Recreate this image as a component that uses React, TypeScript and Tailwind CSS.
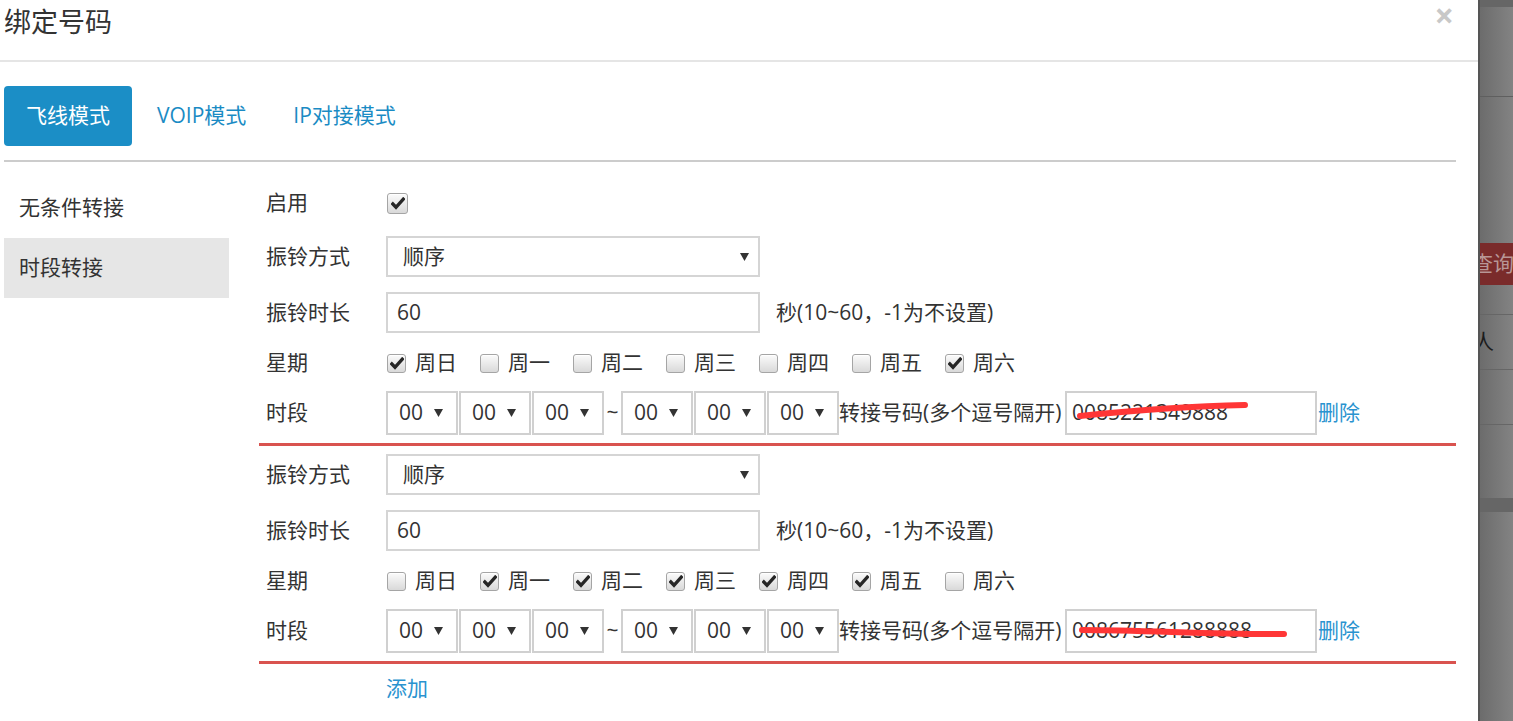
import React from 'react';

type Day = { name: string; on: boolean };

const Caret = () => (
  <svg width="9" height="8" viewBox="0 0 9 8" className="shrink-0">
    <path d="M0 0h9L4.5 8z" fill="#333" />
  </svg>
);

const Box: React.FC<{ on: boolean; big?: boolean }> = ({ on, big }) => (
  <span
    className={
      (big ? 'w-[21px] h-[21px] ' : 'w-[19px] h-[19px] ') +
      'shrink-0 flex items-center justify-center rounded-[3px] border border-[#a5a5a5] bg-gradient-to-b from-[#fbfbfb] to-[#d9d9d9] shadow-[inset_0_1px_0_#fff]'
    }
  >
    {on && (
      <svg width="14" height="13" viewBox="0 0 14 13">
        <path d="M1.8 7 L5 10.3 L12.3 2.2" stroke="#262626" strokeWidth="3.4" fill="none" strokeLinecap="square" />
      </svg>
    )}
  </span>
);

const TimeSelect = () => (
  <div className="w-[72px] h-[44px] shrink-0 border-2 border-[#d0d0d0] flex items-center justify-between pl-[11px] pr-[13px]">
    <span>00</span>
    <Caret />
  </div>
);

const Row: React.FC<{ label: string; className: string; children: React.ReactNode }> = ({ label, className, children }) => (
  <div className={'flex items-center ' + className}>
    <div className="w-[127px] pl-[7px] shrink-0">{label}</div>
    {children}
  </div>
);

const Block: React.FC<{ first?: boolean; days: Day[]; phone: string; scribble: string }> = ({ first, days, phone, scribble }) => (
  <div>
    {first && (
      <Row label="启用" className="h-[40px] mb-[13px]">
        <span className="ml-[1px]">
          <Box on big />
        </span>
      </Row>
    )}
    <Row label="振铃方式" className="h-[41px]">
      <div className="w-[374px] h-[41px] border-2 border-[#d5d5d5] flex items-center justify-between pl-[15px] pr-[9px]">
        <span>顺序</span>
        <Caret />
      </div>
    </Row>
    <Row label="振铃时长" className="h-[41px] mt-[15px]">
      <div className="w-[374px] h-[41px] border-2 border-[#d5d5d5] flex items-center pl-[9px]">60</div>
      <span className="ml-[16px]">秒(10~60，-1为不设置)</span>
    </Row>
    <Row label="星期" className="h-[40px] mt-[10px]">
      <div className="flex items-center ml-[1px]">
        {days.map((d) => (
          <div key={d.name} className="w-[93px] flex items-center gap-[9px]">
            <Box on={d.on} />
            <span>{d.name}</span>
          </div>
        ))}
      </div>
    </Row>
    <Row label="时段" className="h-[44px] mt-[8px]">
      <div className="flex items-center gap-[1px]">
        <TimeSelect />
        <TimeSelect />
        <TimeSelect />
      </div>
      <span className="w-[17px] text-center">~</span>
      <div className="flex items-center gap-[1px]">
        <TimeSelect />
        <TimeSelect />
        <TimeSelect />
      </div>
      <span className="w-[226px] whitespace-nowrap">转接号码(多个逗号隔开)</span>
      <div className="relative w-[252px] h-[44px] border-2 border-[#d0d0d0] flex items-center pl-[5px]">
        <span>{phone}</span>
        <svg className="absolute left-0 top-0" width="252" height="44" viewBox="0 0 252 44">
          <path d={scribble} stroke="#ff3636" strokeWidth="6" fill="none" strokeLinecap="round" />
        </svg>
      </div>
      <a className="ml-[1px] text-[#2a93cf] cursor-pointer">删除</a>
    </Row>
    <div className="h-[3px] bg-[#d9534f] mt-[8px]" />
  </div>
);

const week = ['周日', '周一', '周二', '周三', '周四', '周五', '周六'];

export default function App() {
  return (
    <div className="flex w-[1513px] h-[721px] overflow-hidden bg-white text-[21px] text-[#333] font-['Open_Sans','Noto_Sans_CJK_SC',sans-serif]">
      <div className="w-[1478px] shrink-0 bg-white">
        <div className="h-[62px] border-b-2 border-[#e5e5e5] flex justify-between items-start pl-[4px] pr-[24px]">
          <h4 className="text-[27px] leading-[36px] pt-[4px]">绑定号码</h4>
          <span className="text-[34px] leading-[30px] font-bold text-[#c8c8c8]">×</span>
        </div>
        <div className="pl-[4px] pr-[22px]">
          <div className="flex gap-[3px] mt-[24px] pb-[14px] border-b-2 border-[#cccccc]">
            <div className="h-[60px] px-[22px] flex items-center rounded-[4px] bg-[#1b8ec6] text-white">飞线模式</div>
            <div className="h-[60px] px-[22px] flex items-center text-[#1a8bc4]">VOIP模式</div>
            <div className="h-[60px] px-[22px] flex items-center text-[#1a8bc4]">IP对接模式</div>
          </div>
          <div className="flex">
            <div className="w-[225px] shrink-0 mt-[16px]">
              <div className="h-[60px] flex items-center pl-[15px]">无条件转接</div>
              <div className="h-[60px] flex items-center pl-[15px] bg-[#e6e6e6]">时段转接</div>
            </div>
            <div className="ml-[30px] flex-1 mt-[21px]">
              <Block
                first
                days={week.map((n) => ({ name: n, on: n === '周日' || n === '周六' }))}
                phone="0085221349888"
                scribble="M13 23 C 60 18, 120 13, 178 12"
              />
              <div className="mt-[8px]">
                <Block
                  days={week.map((n) => ({ name: n, on: n !== '周日' && n !== '周六' }))}
                  phone="008675561288888"
                  scribble="M15 19 C 80 19, 150 24, 217 23"
                />
              </div>
              <div className="pl-[127px] mt-[10px] leading-[28px]">
                <a className="text-[#2a93cf] cursor-pointer">添加</a>
              </div>
            </div>
          </div>
        </div>
      </div>
      <div className="flex-1 flex flex-col border-l-2 border-[#555] bg-gradient-to-r from-[#6c6c6c] to-[#838383] overflow-hidden">
        <div className="h-[7px] bg-[#666] shrink-0" />
        <div className="h-[90px] border-b border-[#5f5f5f] shrink-0" />
        <div className="h-[146px] shrink-0" />
        <div className="h-[42px] shrink-0 bg-[#7a2b2b] flex items-center whitespace-nowrap">
          <span className="-ml-[8px] text-[#b89696]">查询</span>
        </div>
        <div className="h-[30px] border-b border-[#666] shrink-0" />
        <div className="h-[55px] border-b border-[#666] shrink-0 flex items-center whitespace-nowrap">
          <span className="-ml-[7px] text-[#1c1c1c]">人</span>
        </div>
        <div className="h-[55px] border-b border-[#666] shrink-0" />
        <div className="h-[73px] shrink-0" />
        <div className="h-[14px] bg-[#666] shrink-0" />
      </div>
    </div>
  );
}
